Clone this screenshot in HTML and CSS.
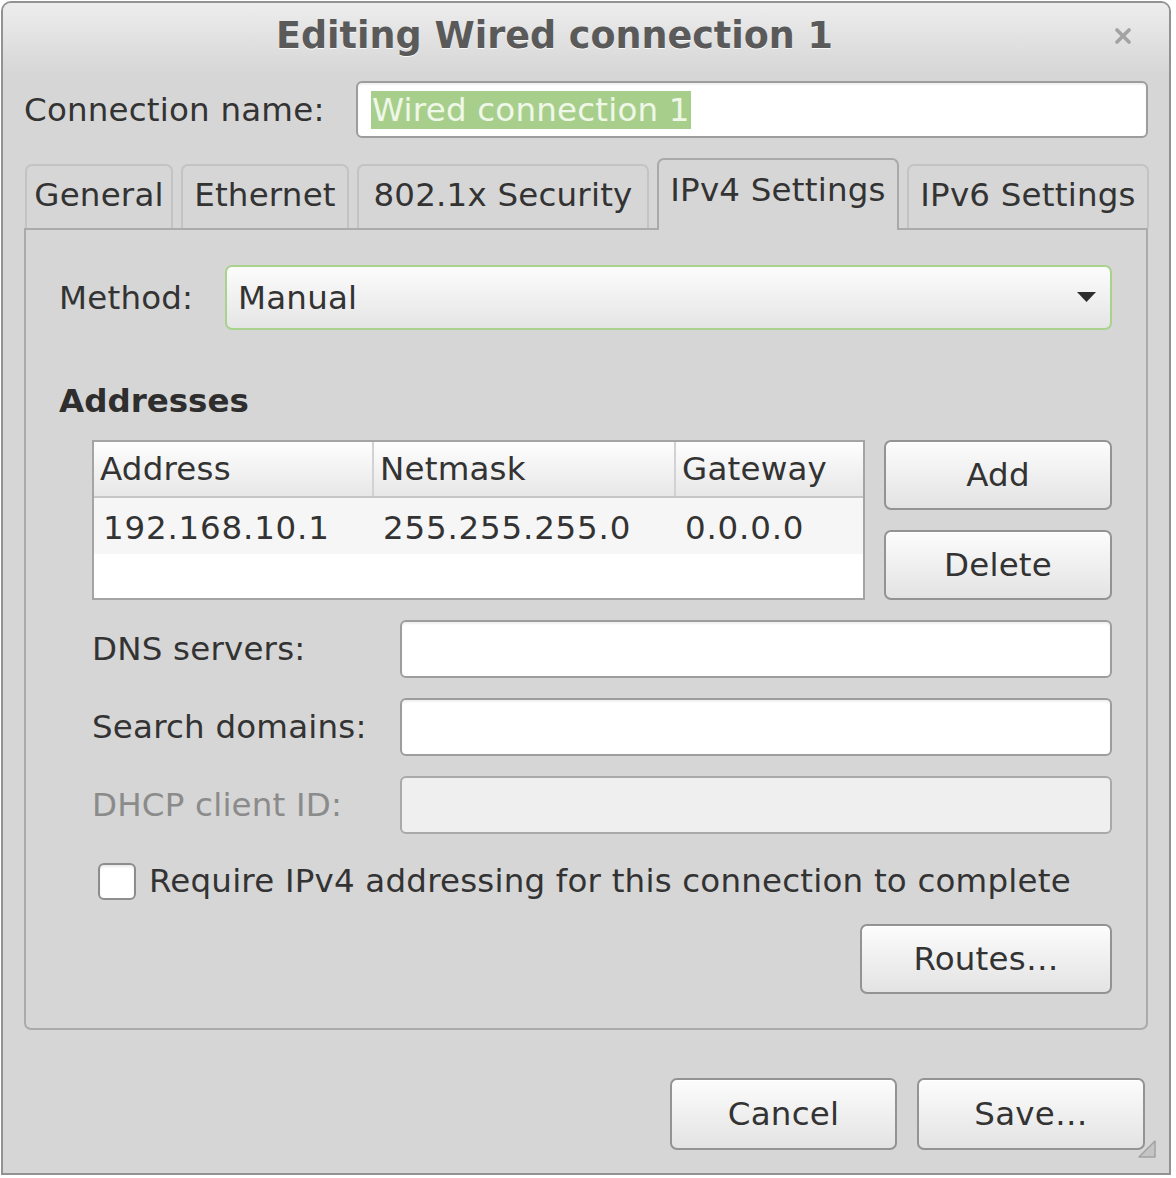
FILE: index.html
```html
<!DOCTYPE html>
<html>
<head>
<meta charset="utf-8">
<link rel="stylesheet" href="styles.css">
</head>
<body>
<div class="window">
  <div class="titlebar">
    <div class="title">Editing Wired connection 1</div>
    <div class="close">
      <svg width="16" height="16" viewBox="0 0 16 16"><path d="M2 2 L14 14 M14 2 L2 14" stroke="#a3a3a3" stroke-width="3.6" stroke-linecap="round"/></svg>
    </div>
  </div>
  <div class="content">
    <div class="name-row">
      <span class="label name-label">Connection name:</span>
      <div class="entry name-entry"><span class="selected">Wired connection 1</span></div>
    </div>
    <div class="tabs">
      <div class="tab">General</div>
      <div class="tab">Ethernet</div>
      <div class="tab">802.1x Security</div>
      <div class="tab active">IPv4 Settings</div>
      <div class="tab">IPv6 Settings</div>
    </div>
    <div class="panel">
      <div class="method-row">
        <span class="label method-label">Method:</span>
        <div class="combo">
          <span class="combo-text">Manual</span>
          <svg class="combo-arrow" width="19" height="10" viewBox="0 0 19 10"><path d="M0 0 H19 L9.5 10 Z" fill="#2e2e2e"/></svg>
        </div>
      </div>
      <div class="section-title">Addresses</div>
      <div class="addr-row">
        <div class="table">
          <div class="thead">
            <div class="th c1">Address</div>
            <div class="th c2">Netmask</div>
            <div class="th c3">Gateway</div>
          </div>
          <div class="trow">
            <div class="td c1">192.168.10.1</div>
            <div class="td c2">255.255.255.0</div>
            <div class="td c3">0.0.0.0</div>
          </div>
        </div>
        <div class="side-buttons">
          <button class="btn side-btn">Add</button>
          <button class="btn side-btn">Delete</button>
        </div>
      </div>
      <div class="field-row">
        <span class="label field-label">DNS servers:</span>
        <div class="entry field-entry"></div>
      </div>
      <div class="field-row">
        <span class="label field-label">Search domains:</span>
        <div class="entry field-entry"></div>
      </div>
      <div class="field-row">
        <span class="label field-label disabled">DHCP client ID:</span>
        <div class="entry field-entry entry-disabled"></div>
      </div>
      <div class="check-row">
        <span class="checkbox"></span>
        <span class="label">Require IPv4 addressing for this connection to complete</span>
      </div>
      <div class="routes-row">
        <button class="btn routes-btn">Routes…</button>
      </div>
    </div>
    <div class="actions">
      <button class="btn action-btn cancel-btn">Cancel</button>
      <button class="btn action-btn">Save…</button>
    </div>
  </div>
  <svg class="grip" width="18" height="18" viewBox="0 0 18 18"><path d="M17 1 V17 H1 Z" fill="#c4c4c4" stroke="#a2a2a2" stroke-width="1.5" stroke-linejoin="round"/></svg>
</div>
</body>
</html>
```

FILE: styles.css
```css
* { box-sizing: border-box; }

body {
  margin: 0;
  background: #ffffff;
  font-family: "DejaVu Sans", "Liberation Sans", sans-serif;
  font-size: 32.5px;
  letter-spacing: 0.2px;
  color: #333333;
}

.window {
  position: relative;
  margin: 1px 0 0 1px;
  width: 1170px;
  height: 1174px;
  border: 2px solid #929292;
  border-radius: 10px 10px 0 0;
  background: #d6d6d6;
}

.titlebar {
  height: 72px;
  display: flex;
  align-items: center;
  padding: 0 29px 8px 0;
  background: linear-gradient(#ededed, #d6d6d6);
  border-radius: 8px 8px 0 0;
}

.title {
  flex: 1;
  text-align: center;
  font-weight: bold;
  font-size: 36.5px;
  letter-spacing: 0;
  color: #5a5a5a;
  text-shadow: 0 1px 0 rgba(255,255,255,0.8);
}

.close {
  width: 34px;
  display: flex;
  justify-content: center;
  align-items: center;
  padding-top: 2px;
}

.content {
  padding: 0 21px;
}

.label {
  white-space: nowrap;
}

.name-row {
  margin-top: 6px;
  height: 57px;
  display: flex;
  align-items: center;
}

.name-label {
  width: 332px;
  flex: none;
}

.entry {
  background: #ffffff;
  border: 2px solid #9d9d9d;
  border-radius: 6px;
  box-shadow: inset 0 2px 2px rgba(0,0,0,0.06);
}

.name-entry {
  flex: 1;
  height: 57px;
  display: flex;
  align-items: center;
  padding-left: 13px;
}

.selected {
  background: #a7cf8b;
  color: #eff7e8;
  line-height: 38px;
  height: 38px;
  padding: 0 1px;
}

.tabs {
  margin-top: 20px;
  height: 72px;
  display: grid;
  grid-template-columns: 148px 168px 292px 242px 242px;
  column-gap: 8px;
  align-items: end;
  padding-left: 1px;
  margin-bottom: -2px;
  position: relative;
  z-index: 1;
}

.tab {
  height: 64px;
  margin-bottom: 2px;
  border: 2px solid #c3c3c3;
  border-bottom: none;
  border-radius: 7px 7px 0 0;
  background: #d6d6d6;
  display: flex;
  align-items: center;
  justify-content: center;
  white-space: nowrap;
  padding-bottom: 4px;
}

.tab.active {
  height: 72px;
  margin-bottom: 0;
  border-color: #a9a9a9;
  padding-bottom: 10px;
}

.panel {
  border: 2px solid #ababab;
  border-radius: 0 0 7px 7px;
  padding: 35px 34px 34px 33px;
}

.method-row {
  height: 65px;
  display: flex;
  align-items: center;
}

.method-label {
  width: 166px;
  flex: none;
}

.combo {
  flex: 1;
  height: 65px;
  border: 2px solid #a9d38d;
  border-radius: 7px;
  background: linear-gradient(#fcfcfc, #e5e5e5);
  display: flex;
  align-items: center;
  justify-content: space-between;
  padding: 0 14px 0 11px;
}

.combo-arrow {
  margin-bottom: 2px;
}

.section-title {
  margin-top: 51px;
  height: 40px;
  line-height: 40px;
  font-weight: bold;
  letter-spacing: 0;
  color: #2e2e2e;
}

.addr-row {
  margin-top: 19px;
  padding-left: 33px;
  height: 160px;
  display: flex;
  gap: 19px;
}

.table {
  width: 773px;
  height: 160px;
  border: 2px solid #a4a4a4;
  background: #ffffff;
}

.thead {
  height: 56px;
  display: flex;
  background: linear-gradient(#fefefe, #e7e7e7);
  border-bottom: 2px solid #c6c6c6;
}

.trow {
  height: 56px;
  display: flex;
  background: #f6f6f6;
}

.c1 { width: 278px; }
.c2 { width: 302px; }
.c3 { flex: 1; }

.th {
  display: flex;
  align-items: center;
  padding-left: 6px;
  white-space: nowrap;
}

.th.c2, .th.c3 {
  border-left: 2px solid #d2d2d2;
}

.td {
  display: flex;
  align-items: center;
  padding-left: 9px;
  padding-top: 4px;
  letter-spacing: 0.8px;
  white-space: nowrap;
}

.td.c2, .td.c3 {
  border-left: 2px solid transparent;
}

.side-buttons {
  width: 228px;
  display: flex;
  flex-direction: column;
  gap: 20px;
}

.btn {
  font-family: inherit;
  font-size: inherit;
  letter-spacing: inherit;
  color: #333333;
  border: 2px solid #939393;
  border-radius: 7px;
  background: linear-gradient(#fcfcfc, #e3e3e3);
  padding: 0;
  margin: 0;
  white-space: nowrap;
  box-shadow: inset 0 1px 0 #ffffff;
}

.side-btn {
  height: 70px;
  width: 228px;
}

.field-row {
  margin-top: 20px;
  padding-left: 33px;
  height: 58px;
  display: flex;
  align-items: center;
}

.field-label {
  width: 308px;
  flex: none;
}

.field-label.disabled {
  color: #8b8b8b;
}

.field-entry {
  flex: 1;
  height: 58px;
}

.entry-disabled {
  background: #efefef;
  border-color: #a9a9a9;
  box-shadow: none;
}

.check-row {
  margin-top: 28px;
  padding-left: 39px;
  height: 38px;
  display: flex;
  align-items: center;
  gap: 13px;
}

.checkbox {
  width: 38px;
  height: 37px;
  flex: none;
  background: #ffffff;
  border: 2px solid #8d8d8d;
  border-radius: 6px;
  box-shadow: inset 0 2px 2px rgba(0,0,0,0.08);
}

.routes-row {
  margin-top: 24px;
  height: 70px;
  display: flex;
  justify-content: flex-end;
}

.routes-btn {
  width: 252px;
  height: 70px;
}

.actions {
  margin-top: 48px;
  padding-right: 3px;
  display: flex;
  justify-content: flex-end;
  gap: 20px;
}

.action-btn {
  width: 228px;
  height: 72px;
}

.cancel-btn {
  width: 227px;
}

.grip {
  position: absolute;
  right: 13px;
  bottom: 15px;
}
```
